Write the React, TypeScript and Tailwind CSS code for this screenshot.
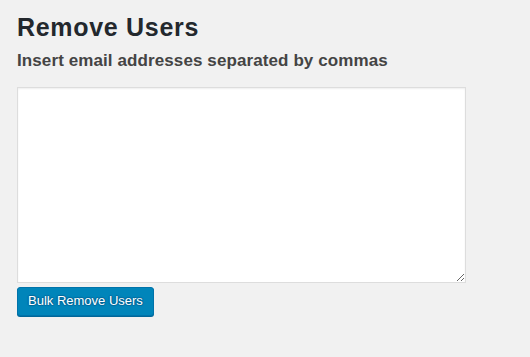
export default function App() {
  return (
    <div
      className="min-h-[357px] w-full bg-[#f1f1f1] pl-[17px] pt-[11px]"
      style={{ fontFamily: '"Liberation Sans", Arial, sans-serif' }}
    >
      <h1 className="text-[25px] font-bold leading-[32px] tracking-[0.7px] text-[#23282d]">Remove Users</h1>
      <h2 className="mt-[7px] text-[17px] font-bold leading-[22px] tracking-[0.1px] text-[#444]">
        Insert email addresses separated by commas
      </h2>
      <div className="mt-[15px]">
        <textarea className="block h-[196px] w-[449px] resize border border-[#ddd] bg-white shadow-[inset_0_1px_2px_rgba(0,0,0,0.07)] outline-none" />
      </div>
      <button className="mt-[4px] h-[29px] rounded-[3px] border border-[#0073aa] bg-[#0085ba] px-[10px] pb-[1px] text-[13px] leading-[26px] text-white shadow-[0_1px_0_#006799] [text-shadow:0_-1px_1px_#006799,1px_0_1px_#006799,0_1px_1px_#006799,-1px_0_1px_#006799]">
        Bulk Remove Users
      </button>
    </div>
  );
}
